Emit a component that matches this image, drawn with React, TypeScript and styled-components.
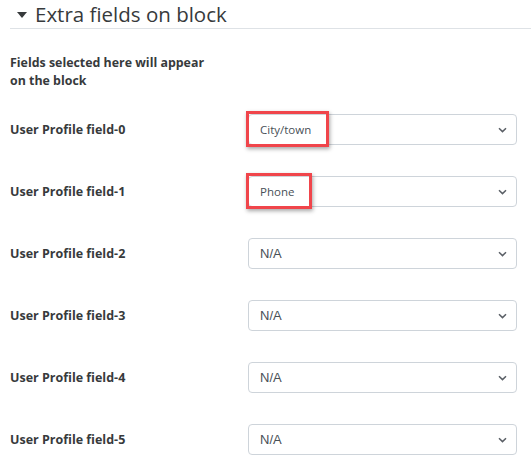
import React from 'react';
import styled, { createGlobalStyle } from 'styled-components';

const GlobalStyle = createGlobalStyle`
  html, body { margin: 0; padding: 0; background: #fff; }
  body { font-family: "Open Sans", "Noto Sans", sans-serif; color: #373a3c; }
`;

const Page = styled.div`
  width: 531px;
  height: 469px;
  padding-left: 10px;
  box-sizing: border-box;
  overflow: hidden;
`;

const Header = styled.div`
  display: flex;
  align-items: center;
  height: 28px;
  padding-left: 7px;
  border-bottom: 1px solid #dee2e6;
`;

const Caret = styled.span`
  width: 0;
  height: 0;
  border-left: 5px solid transparent;
  border-right: 5px solid transparent;
  border-top: 6px solid #373a3c;
  margin: 2px 8px 0 0;
`;

const Title = styled.h3`
  margin: 0;
  font-size: 20.5px;
  font-weight: 400;
  color: #373a3c;
`;

const Note = styled.p`
  margin: 25px 0 0;
  width: 205px;
  font-size: 12.4px;
  line-height: 18px;
  font-weight: 700;
  color: #373a3c;
`;

const Fields = styled.div`
  display: flex;
  flex-direction: column;
  gap: 31px;
  margin-top: 24px;
`;

const Row = styled.div`
  display: grid;
  grid-template-columns: 238px 269px;
  align-items: center;
  height: 31px;
`;

const Label = styled.label`
  font-size: 12.5px;
  font-weight: 700;
  color: #373a3c;
`;

const SelectBox = styled.div`
  position: relative;
  height: 31px;
  box-sizing: border-box;
  border: 1px solid #ced4da;
  border-radius: 4px;
  display: flex;
  align-items: center;
  justify-content: space-between;
  padding: 0 9px 0 11px;
`;

const Value = styled.span<{ $custom?: boolean }>`
  font-family: ${({ $custom }) => ($custom ? '"Open Sans", sans-serif' : '"Liberation Sans", Arial, sans-serif')};
  font-size: ${({ $custom }) => ($custom ? '11.5px' : '13px')};
  color: #495057;
`;

const Highlight = styled.span<{ $w: number }>`
  position: absolute;
  left: -3px;
  top: -4px;
  width: ${({ $w }) => $w}px;
  height: 36px;
  box-sizing: border-box;
  border: 3px solid #f0454b;
  box-shadow: 1px 2px 4px rgba(0, 0, 0, 0.35);
  pointer-events: none;
`;

const Chevron = () => (
  <svg width="9" height="6" viewBox="0 0 9 6" fill="none">
    <path d="M1 1.2 L4.5 4.6 L8 1.2" stroke="#5a5f66" strokeWidth="1.5" />
  </svg>
);

const fields = [
  { value: 'City/town', mark: 83 },
  { value: 'Phone', mark: 66 },
  { value: 'N/A' },
  { value: 'N/A' },
  { value: 'N/A' },
  { value: 'N/A' },
];

export default function App() {
  return (
    <Page>
      <GlobalStyle />
      <Header>
        <Caret />
        <Title>Extra fields on block</Title>
      </Header>
      <Note>Fields selected here will appear on the block</Note>
      <Fields>
        {fields.map((f, i) => (
          <Row key={i}>
            <Label>User Profile field-{i}</Label>
            <SelectBox>
              <Value $custom={!!f.mark}>{f.value}</Value>
              <Chevron />
              {f.mark && <Highlight $w={f.mark} />}
            </SelectBox>
          </Row>
        ))}
      </Fields>
    </Page>
  );
}
